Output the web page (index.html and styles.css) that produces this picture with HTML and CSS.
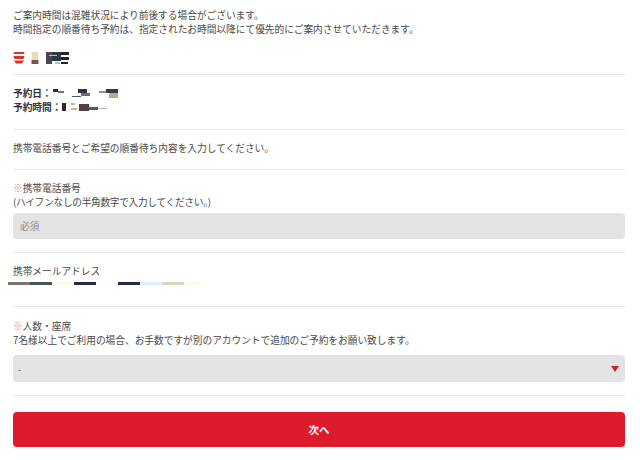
FILE: index.html
```html
<!DOCTYPE html>
<html lang="ja">
    <head>
        <meta charset="utf-8">
        <link rel="stylesheet" href="styles.css">
    </head>
    <body>
        <div class="wrap">
            <div class="sec sec-info">
                <p>ご案内時間は混雑状況により前後する場合がございます。</p>
                <p>時間指定の順番待ち予約は、指定されたお時間以降にて優先的にご案内させていただきます。</p>
                <div class="shop">
                    <svg width="72" height="14" viewBox="0 0 72 14">
                        <path d="M0.500 1h11l-0.500 2h-10zM0.500 5h11l-1 3h-9zM1 9.500h10l-2 3h-6z" fill="#d9352b"/>
                        <path d="M19 1h6v8h-6z" fill="#e8d9bd"/>
                        <path d="M18.500 9h7v4h-7z" fill="#6f5d48"/>
                        <path d="M33 1h6v12h-6z" fill="#4a4655"/>
                        <path d="M39 1h9v9h-9z" fill="#2b3a44"/>
                        <path d="M48 1h8v3h-8zM48 6h8v3h-8zM48 11h7v2h-7z" fill="#22222c"/>
                        <path d="M36 4h8v1h-8zM42 11h5v2h-5z" fill="#b9c2c6"/>
                    </svg>
                </div>
            </div>
            <div class="sec sec-date">
                <p class="strong">予約日：
                    <svg class="mask" width="66" height="10" viewBox="0 0 66 10">
                        <path d="M0 1h5v3h-5z" fill="#2c2c3a"/><path d="M5 3h6v2h-6z" fill="#6c7480"/>
                        <path d="M19 8h9v1h-9z" fill="#55565e"/><path d="M25 1h9v4h-9z" fill="#33323f"/><path d="M28 5h9v3h-9z" fill="#6a6d78"/>
                        <path d="M46 3h7v2h-7z" fill="#8a8f98"/><path d="M53 1h12v4h-12z" fill="#3a3a46"/><path d="M56 5h9v5h-9z" fill="#b9a98e"/>
                    </svg>
                </p>
                <p class="strong">予約時間：
                    <svg class="mask" width="66" height="10" viewBox="0 0 66 10">
                        <path d="M0 1h4v8h-4z" fill="#2e2a2a"/>
                        <path d="M9 1h4v2h-4zM9 6h6v2h-6z" fill="#c9b89c"/>
                        <path d="M17 2h10v7h-10z" fill="#4d4248"/><path d="M27 5h9v3h-9z" fill="#55586a"/><path d="M36 6h9v1h-9z" fill="#b5bcc6"/>
                    </svg>
                </p>
            </div>
            <div class="sec sec-lead">
                <p>携帯電話番号とご希望の順番待ち内容を入力してください。</p>
            </div>
            <div class="sec sec-tel">
                <p><span class="req">※</span>携帯電話番号</p>
                <p class="hint">(ハイフンなしの半角数字で入力してください。)</p>
                <div class="field field-input">必須</div>
            </div>
            <div class="sec sec-mail">
                <p>携帯メールアドレス</p>
                <div class="strip">
                    <i class="s1"></i><i class="s2"></i><i class="s3"></i><i class="s4"></i><i class="s5"></i><i class="s4"></i><i class="s6"></i><i class="s7"></i><i class="s8"></i>
                </div>
            </div>
            <div class="sec sec-seat">
                <p><span class="req">※</span>人数・座席</p>
                <p>7名様以上でご利用の場合、お手数ですが別のアカウントで追加のご予約をお願い致します。</p>
                <div class="field field-select">
                    <span>-</span>
                    <svg width="8" height="6" viewBox="0 0 8 6"><path d="M0 0h8l-4 6z" fill="#c8202c"/></svg>
                </div>
            </div>
            <div class="next">次へ</div>
        </div>
    </body>
</html>
```

FILE: styles.css
```css
*{
    margin:0;
    padding:0;
    box-sizing:border-box;
}
body{
    font-family:"Noto Sans CJK JP","Liberation Sans",sans-serif;
    font-size:9.7px;
    line-height:14px;
    color:#484848;
    background:#fff;
}
.wrap{
    width:612px;
    margin-left:13px;
}
.sec{
    border-bottom:1px solid #e8e8e8;
}
.sec-info{
    height:75px;
    padding-top:8px;
}
.shop{
    margin-top:15px;
    height:14px;
}
.sec-date{
    height:55px;
    padding-top:11px;
}
.strong{
    font-weight:700;
    color:#333;
    display:flex;
    align-items:center;
}
.mask{
    margin-left:1px;
}
.sec-lead{
    height:40px;
    padding-top:11px;
}
.sec-tel{
    height:83px;
    padding-top:11px;
}
.hint{
    letter-spacing:-0.3px;
}
.req{
    color:#e58a8a;
}
.field{
    height:26px;
    margin-top:4px;
    background:#e3e3e3;
    border-radius:4px;
    display:flex;
    align-items:center;
    padding:0 10px 0 7px;
}
.field-input{
    color:#8a8a8a;
    padding-left:7px;
}
.field-select{
    height:27px;
    margin-top:8px;
    padding-left:5px;
    justify-content:space-between;
    padding-right:6px;
}
.sec-mail{
    height:54px;
    padding-top:11px;
}
.strip{
    display:flex;
    margin:4px 0 0 -5px;
    height:3px;
}
.strip i{
    display:block;
    width:22px;
    height:3px;
}
.strip .s1{background:#7d7468;}
.strip .s2{background:#47565a;}
.strip .s3{background:#fdfbe9;}
.strip .s4{background:#252b4a;}
.strip .s5{background:#fbfdf6;}
.strip .s6{background:#dfeefa;}
.strip .s7{background:#e0d6bd;}
.strip .s8{background:#fdfcec;}
.sec-seat{
    height:89px;
    padding-top:12px;
}
.next{
    height:35px;
    margin-top:16px;
    background:#dc1c2c;
    border-radius:4px;
    color:#fff;
    font-size:10.5px;
    font-weight:700;
    display:flex;
    align-items:center;
    justify-content:center;
}
```
